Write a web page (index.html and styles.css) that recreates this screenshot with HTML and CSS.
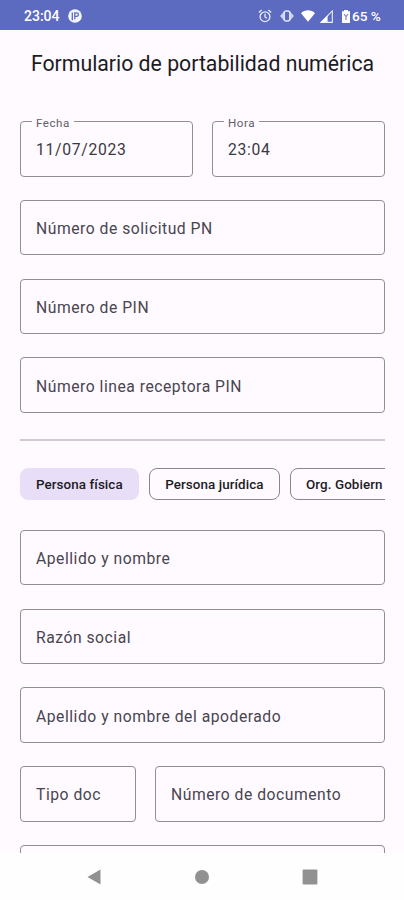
FILE: index.html
```html
<!DOCTYPE html>
<html lang="es">
<head>
<meta charset="utf-8">
<title>Formulario de portabilidad numérica</title>
<link rel="stylesheet" href="styles.css">
</head>
<body>
<header class="status">
  <span class="clock">23:04</span>
  <svg class="app-icon" viewBox="0 0 14 14"><circle cx="7" cy="7" r="6.8" fill="#f3f5ff"/><path d="M4.3 11.2V3.6M6.8 10.2V3.8H8.6C11 3.8 11 7.3 8.7 7.3H7" fill="none" stroke="#5c6bc0" stroke-width="1.3"/></svg>
  <div class="indicators">
    <svg class="alarm" viewBox="0 0 14 14"><g fill="none" stroke="#e8ecff" stroke-width="1.3"><circle cx="7" cy="7.7" r="4.9"/><path d="M.8 3.5 3.6 1.1M13.2 3.5 10.4 1.1M7 4.8V8L9 9.3"/></g></svg>
    <svg class="vibrate" viewBox="0 0 14 14"><path d="M4 2.5V11.5L0 7ZM10 2.5V11.5L14 7Z" fill="#c9d1f6"/><rect x="4.2" y="2" width="5.6" height="10" rx="2" fill="#5c6bc0" stroke="#dfe5ff" stroke-width="1.5"/></svg>
    <svg class="wifi" viewBox="0 0 14 12"><path d="M0 3.2C4-.6 10-.6 14 3.2L7 11.8Z" fill="#fff"/></svg>
    <svg class="signal" viewBox="0 0 12 12"><path d="M.9 11.4 11.4.9V11.4Z" fill="none" stroke="#e9edff"/><path d="M.5 11.5 7 5V11.5Z" fill="#fff"/></svg>
    <svg class="battery" viewBox="0 0 10 13"><path d="M3 0H7V1.3H9V13H1V1.3H3Z" fill="#fff"/><path d="M3 4 5 6.7 7 4M5 6.5V10" fill="none" stroke="#7380ca" stroke-width="1.1"/></svg>
    <span class="percent">65 %</span>
  </div>
</header>
<main class="page">
  <h1 class="title">Formulario de portabilidad numérica</h1>
  <section class="group">
    <div class="row halves">
      <div class="field"><span class="caption">Fecha</span><span class="value">11/07/2023</span></div>
      <div class="field"><span class="caption">Hora</span><span class="value">23:04</span></div>
    </div>
    <div class="field">Número de solicitud PN</div>
    <div class="field">Número de PIN</div>
    <div class="field">Número linea receptora PIN</div>
  </section>
  <div class="divider"></div>
  <div class="chips">
    <div class="chip selected">Persona física</div>
    <div class="chip">Persona jurídica</div>
    <div class="chip">Org. Gobiern</div>
  </div>
  <section class="group">
    <div class="field">Apellido y nombre</div>
    <div class="field">Razón social</div>
    <div class="field">Apellido y nombre del apoderado</div>
    <div class="row document">
      <div class="field">Tipo doc</div>
      <div class="field">Número de documento</div>
    </div>
    <div class="field"></div>
  </section>
</main>
<nav class="navbar">
  <svg viewBox="0 0 16 16"><path d="M1.5 8 14.5.5V15.5Z" fill="#919191"/></svg>
  <svg viewBox="0 0 16 16"><circle cx="8" cy="8" r="7" fill="#919191"/></svg>
  <svg viewBox="0 0 16 16"><rect x=".6" y=".6" width="14.8" height="14.8" rx="1" fill="#919191"/></svg>
</nav>
</body>
</html>
```
FILE: styles.css
```css
* { box-sizing: border-box; }
body {
  margin: 0;
  width: 404px;
  height: 900px;
  display: flex;
  flex-direction: column;
  overflow: hidden;
  background: #fefefe;
  font-family: Roboto, sans-serif;
  color: #1c1b1f;
}
.status {
  height: 30px;
  flex: none;
  display: flex;
  align-items: center;
  padding: 2px 22px 0 24px;
  background: #5c6bc0;
  color: #fff;
  font-size: 14px;
  font-weight: 500;
}
.clock { width: 44px; }
.app-icon { width: 14px; height: 14px; }
.indicators { display: flex; align-items: center; margin-left: auto; }
.alarm { width: 14px; height: 14px; margin-right: 8px; }
.vibrate { width: 14px; height: 14px; margin-right: 7px; }
.wifi { width: 14px; height: 12px; margin-right: 5px; }
.signal { width: 13px; height: 13px; margin-right: 8px; }
.battery { width: 10px; height: 13px; margin-right: 1px; }
.percent { width: 30px; white-space: nowrap; font-size: 13.6px; }
.page {
  height: 823px;
  flex: none;
  overflow: hidden;
  padding: 0 19px 0 20px;
  background: #fefaff;
}
.title {
  margin: 20px 0 43px;
  height: 28px;
  line-height: 28px;
  font-size: 21.25px;
  font-weight: 400;
  text-align: center;
  white-space: nowrap;
}
.group { display: flex; flex-direction: column; gap: 23.25px; }
.row { display: grid; }
.halves { grid-template-columns: 173px 173px; gap: 19px; }
.document { grid-template-columns: 116px 230px; gap: 19px; }
.field {
  position: relative;
  height: 55.5px;
  display: flex;
  align-items: center;
  padding: 2px 15px 0;
  border: 1px solid #918e95;
  border-radius: 4px;
  font-size: 15.7px;
  letter-spacing: .52px;
  color: #49454f;
  white-space: nowrap;
}
.value { color: #3b393f; letter-spacing: .7px; }
.caption {
  position: absolute;
  top: -6px;
  left: 11px;
  padding: 0 4px;
  background: #fefaff;
  font-size: 11.6px;
  line-height: 14px;
  color: #625e67;
}
.divider { height: 2px; margin: 26px 0 27.5px; background: #d0c9cf; }
.chips { display: flex; gap: 10.5px; overflow: hidden; margin-bottom: 29.5px; }
.chip {
  flex: none;
  height: 32px;
  display: flex;
  align-items: center;
  padding: 1px 15px 0;
  border: 1px solid #89868c;
  border-radius: 8px;
  font-size: 13.4px;
  font-weight: 500;
  letter-spacing: .08px;
  white-space: nowrap;
}
.chip:last-child { width: 130px; }
.selected { background: #e8def8; border-color: #e8def8; }
.navbar {
  height: 47px;
  flex: none;
  display: flex;
  align-items: center;
  justify-content: space-between;
  padding: 0 86px;
}
.navbar svg { width: 16px; height: 16px; }
```
